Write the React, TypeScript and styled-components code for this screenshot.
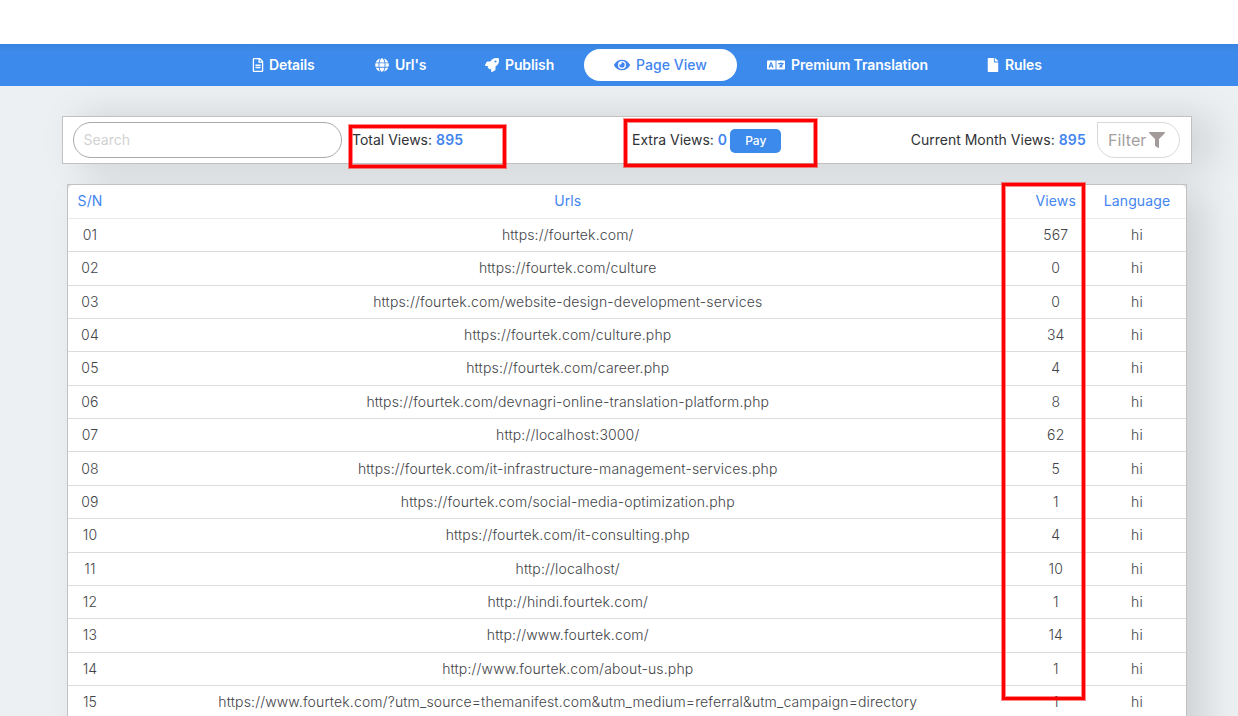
import React from "react";
import styled, { createGlobalStyle } from "styled-components";
import { FaRegFileAlt, FaGlobe, FaRocket, FaEye, FaLanguage, FaFile, FaFilter } from "react-icons/fa";

const GlobalStyle = createGlobalStyle`
  * { box-sizing: border-box; }
  body { margin: 0; background: #ecf0f3; font-family: Inter, "Liberation Sans", sans-serif; }
`;

const Page = styled.div`
  position: relative;
  height: 716px;
  overflow: hidden;
  background: #ecf0f3;
`;

const TopSpace = styled.div`
  height: 44px;
  background: #fff;
`;

const Nav = styled.nav`
  height: 42px;
  padding-left: 221px;
  display: flex;
  align-items: center;
  background: linear-gradient(#3a84e0, #3c8aeb 8px);
`;

const NavItem = styled.a<{ $width: number; $gap?: number; $active?: boolean }>`
  width: ${(p) => p.$width}px;
  height: 32px;
  padding: 0 0 1px 30px;
  display: flex;
  align-items: center;
  gap: ${(p) => p.$gap ?? 6}px;
  border-radius: 16px;
  background: ${(p) => (p.$active ? "#fff" : "transparent")};
  color: ${(p) => (p.$active ? "#4285f0" : "#fff")};
  font-size: 14px;
  font-weight: ${(p) => (p.$active ? 500 : 600)};
  letter-spacing: ${(p) => (p.$active ? 0.05 : -0.12)}px;
  white-space: nowrap;
  svg { flex: none; }
`;

const Toolbar = styled.section`
  width: 1130px;
  height: 48px;
  margin: 30px 0 0 62px;
  padding: 0 11px 0 10px;
  display: flex;
  align-items: center;
  border: 1px solid #c2c2c2;
  background: #fff;
  box-shadow: 18px 2px 40px rgba(0, 0, 0, 0.14);
`;

const SearchInput = styled.input`
  width: 269px;
  height: 36px;
  padding: 0 10px 1px 9.5px;
  border: 1px solid #aaa;
  border-radius: 18px;
  font: 14px Inter, sans-serif;
  outline: none;
  &::placeholder { color: #d2d2d2; opacity: 1; }
`;

const Stat = styled.div<{ $left?: number; $width?: number; $end?: boolean }>`
  margin-left: ${(p) => (p.$end ? "auto" : `${p.$left ?? 0}px`)};
  width: ${(p) => (p.$width ? `${p.$width}px` : "auto")};
  padding-bottom: 1px;
  display: flex;
  align-items: center;
  gap: 4px;
  color: #303236;
  font-size: 14px;
  letter-spacing: 0;
  white-space: nowrap;
  strong { color: #4285f0; font-weight: 600; letter-spacing: 0.2px; }
`;

const PayButton = styled.button`
  width: 51px;
  height: 24px;
  margin: 2px 0 0 -1px;
  padding: 0;
  border: 0;
  border-radius: 5px;
  background: #3c8aeb;
  color: #fff;
  font: 500 12px Inter, sans-serif;
`;

const FilterButton = styled.button`
  width: 83px;
  height: 36px;
  margin-left: 11px;
  padding: 0 0 0 10px;
  display: flex;
  align-items: center;
  border: 1px solid #d8d8d8;
  border-radius: 0 18px 18px 18px;
  background: #fff;
  color: #a3a0a0;
  font: 16px Inter, sans-serif;
  letter-spacing: 0.1px;
  svg { margin-left: 3px; color: #a39a9a; }
`;

const Table = styled.section`
  width: 1120px;
  height: 560px;
  margin: 20px 0 0 67px;
  border: 1px solid #c2c2c2;
  background: #dfe2e5;
  box-shadow: 17px 10px 34px rgba(0, 0, 0, 0.13);
`;

const Row = styled.div<{ $head?: boolean }>`
  height: ${(p) => (p.$head ? 33.96 : 33.37)}px;
  padding-bottom: ${(p) => (p.$head ? 1.6 : 1.2)}px;
  display: grid;
  grid-template-columns: 44px 911.5px 64.5px 98px;
  align-items: center;
  justify-items: center;
  border-bottom: 1px solid ${(p) => (p.$head ? "#e9eaeb" : "#dcdcdc")};
  border-radius: ${(p) => (p.$head ? "5px 5px 0 0" : 0)};
  background: #fff;
  color: ${(p) => (p.$head ? "#4285f0" : "#424448")};
  font-size: 14px;
  font-weight: ${(p) => (p.$head ? 400 : 300)};
  letter-spacing: ${(p) => (p.$head ? 0.1 : 0.15)}px;
  white-space: nowrap;
`;

const Highlight = styled.div<{ $x: number; $y: number; $w: number; $h: number }>`
  position: absolute;
  left: ${(p) => p.$x}px;
  top: ${(p) => p.$y}px;
  width: ${(p) => p.$w}px;
  height: ${(p) => p.$h}px;
  border: 3px solid #fe0000;
  box-shadow: 0 0 0 1px rgba(255, 0, 0, 0.45), inset 0 0 0 1px rgba(255, 0, 0, 0.45);
  pointer-events: none;
`;

const rows: [string, number][] = [
  ["https://fourtek.com/", 567],
  ["https://fourtek.com/culture", 0],
  ["https://fourtek.com/website-design-development-services", 0],
  ["https://fourtek.com/culture.php", 34],
  ["https://fourtek.com/career.php", 4],
  ["https://fourtek.com/devnagri-online-translation-platform.php", 8],
  ["http://localhost:3000/", 62],
  ["https://fourtek.com/it-infrastructure-management-services.php", 5],
  ["https://fourtek.com/social-media-optimization.php", 1],
  ["https://fourtek.com/it-consulting.php", 4],
  ["http://localhost/", 10],
  ["http://hindi.fourtek.com/", 1],
  ["http://www.fourtek.com/", 14],
  ["http://www.fourtek.com/about-us.php", 1],
  ["https://www.fourtek.com/?utm_source=themanifest.com&utm_medium=referral&utm_campaign=directory", 1],
];

export default function App() {
  return (
    <Page>
      <GlobalStyle />
      <TopSpace />
      <Nav>
        <NavItem $width={124} $gap={4}><FaRegFileAlt size={14} />Details</NavItem>
        <NavItem $width={110}><FaGlobe size={14} />Url's</NavItem>
        <NavItem $width={129}><FaRocket size={14} />Publish</NavItem>
        <NavItem $width={153} $active><FaEye size={16} />Page View</NavItem>
        <NavItem $width={219}><FaLanguage size={18} />Premium Translation</NavItem>
        <NavItem $width={120} $gap={5}><FaFile size={14} />Rules</NavItem>
      </Nav>
      <Toolbar>
        <SearchInput placeholder="Search" />
        <Stat $left={10} $width={280}>Total Views: <strong>895</strong></Stat>
        <Stat>Extra Views: <strong>0</strong><PayButton>Pay</PayButton></Stat>
        <Stat $end>Current Month Views: <strong>895</strong></Stat>
        <FilterButton>Filter<FaFilter size={16} /></FilterButton>
      </Toolbar>
      <Table>
        <Row $head><span>S/N</span><span>Urls</span><span>Views</span><span>Language</span></Row>
        {rows.map(([url, views], i) => (
          <Row key={url}>
            <span>{String(i + 1).padStart(2, "0")}</span>
            <span>{url}</span>
            <span>{views}</span>
            <span>hi</span>
          </Row>
        ))}
      </Table>
      <Highlight $x={349} $y={125} $w={157} $h={43} />
      <Highlight $x={624} $y={119} $w={193} $h={48} />
      <Highlight $x={1002} $y={183} $w={83} $h={517} />
    </Page>
  );
}
